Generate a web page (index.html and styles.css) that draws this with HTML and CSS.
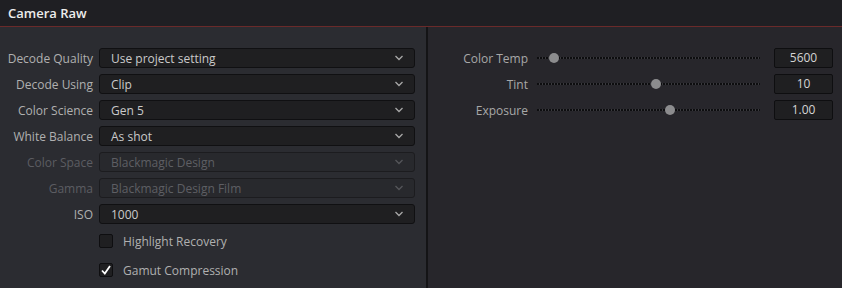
FILE: index.html
```html
<!DOCTYPE html>
<html lang="en">
<head>
    <meta charset="UTF-8">
    <title>Camera Raw</title>
    <link rel="stylesheet" href="styles.css">
</head>
<body>
    <div class="panel-header">Camera Raw</div>
    <div class="panel-body">
        <div class="col-left">
            <div class="row">
                <label>Decode Quality</label>
                <div class="combo"><span>Use project setting</span><svg class="chev" width="10" height="6" viewBox="0 0 10 6"><path d="M1.5 1 L5 4.5 L8.5 1" /></svg></div>
            </div>
            <div class="row">
                <label>Decode Using</label>
                <div class="combo"><span>Clip</span><svg class="chev" width="10" height="6" viewBox="0 0 10 6"><path d="M1.5 1 L5 4.5 L8.5 1" /></svg></div>
            </div>
            <div class="row">
                <label>Color Science</label>
                <div class="combo"><span>Gen 5</span><svg class="chev" width="10" height="6" viewBox="0 0 10 6"><path d="M1.5 1 L5 4.5 L8.5 1" /></svg></div>
            </div>
            <div class="row">
                <label>White Balance</label>
                <div class="combo"><span>As shot</span><svg class="chev" width="10" height="6" viewBox="0 0 10 6"><path d="M1.5 1 L5 4.5 L8.5 1" /></svg></div>
            </div>
            <div class="row disabled">
                <label>Color Space</label>
                <div class="combo"><span>Blackmagic Design</span><svg class="chev" width="10" height="6" viewBox="0 0 10 6"><path d="M1.5 1 L5 4.5 L8.5 1" /></svg></div>
            </div>
            <div class="row disabled">
                <label>Gamma</label>
                <div class="combo"><span>Blackmagic Design Film</span><svg class="chev" width="10" height="6" viewBox="0 0 10 6"><path d="M1.5 1 L5 4.5 L8.5 1" /></svg></div>
            </div>
            <div class="row">
                <label>ISO</label>
                <div class="combo"><span>1000</span><svg class="chev" width="10" height="6" viewBox="0 0 10 6"><path d="M1.5 1 L5 4.5 L8.5 1" /></svg></div>
            </div>
            <div class="check-row">
                <span class="box"></span>
                <span class="check-label">Highlight Recovery</span>
            </div>
            <div class="check-row">
                <span class="box"><svg width="12" height="12" viewBox="0 0 12 12"><path d="M2 6.5 L4.8 9.5 L10 2" /></svg></span>
                <span class="check-label">Gamut Compression</span>
            </div>
        </div>
        <div class="divider"></div>
        <div class="col-right">
            <div class="slider-row">
                <label>Color Temp</label>
                <div class="track"><span class="thumb" style="left: 17px"></span></div>
                <div class="value">5600</div>
            </div>
            <div class="slider-row">
                <label>Tint</label>
                <div class="track"><span class="thumb" style="left: 119px"></span></div>
                <div class="value">10</div>
            </div>
            <div class="slider-row">
                <label>Exposure</label>
                <div class="track"><span class="thumb" style="left: 133px"></span></div>
                <div class="value">1.00</div>
            </div>
        </div>
    </div>
</body>
</html>
```

FILE: styles.css
```css
body { margin: 0; width: 842px; height: 288px; overflow: hidden; background-color: #2b2c31; font-family: "Open Sans", "Liberation Sans", sans-serif; font-size: 12px; color: #b4b4b4; }
.panel-header { height: 27px; line-height: 26px; padding-left: 8px; background-color: #1f1f23; color: #ececec; font-weight: 600; font-size: 13px; border-bottom: 1px solid #6a2a2a; box-sizing: border-box; }
.panel-body { display: flex; height: 261px; }
.col-left { width: 426px; padding-top: 21px; box-sizing: border-box; background-color: #2b2c31; }
.divider { width: 2px; background-color: #141416; }
.col-right { flex: 1; padding-top: 21px; background-color: #27262b; }
.row { display: flex; align-items: center; height: 20px; margin-bottom: 6px; }
.row label { flex: 0 0 99px; text-align: right; padding-right: 6px; box-sizing: border-box; color: #b0b0b0; white-space: nowrap; }
.combo { flex: 0 0 316px; height: 20px; box-sizing: border-box; display: flex; align-items: center; justify-content: space-between; padding: 0 10px 0 11px; background-color: #1f1f21; border: 1px solid #101012; border-radius: 3px; color: #cacaca; }
.chev path { fill: none; stroke: #a8a8a8; stroke-width: 1.3; }
.row.disabled label { color: #5c5d62; }
.row.disabled .combo { background-color: #28292d; border-color: #1c1c1f; color: #5e5f64; }
.row.disabled .chev path { stroke: #55565a; }
.check-row { display: flex; align-items: center; padding-left: 99px; height: 14px; margin-top: 10px; margin-bottom: 1px; }
.check-row + .check-row { margin-top: 15px; }
.box { width: 14px; height: 14px; box-sizing: border-box; background-color: #1f1f21; border: 1px solid #0e0e10; border-radius: 2px; display: flex; align-items: center; justify-content: center; }
.box path { fill: none; stroke: #ffffff; stroke-width: 1.8; }
.check-label { margin-left: 10px; color: #b0b0b0; }
.slider-row { display: flex; align-items: center; height: 20px; margin-bottom: 6px; }
.slider-row label { flex: 0 0 100px; text-align: right; color: #a8a8a8; white-space: nowrap; }
.track { position: relative; flex: 0 0 223px; height: 2px; margin-left: 9px; background: repeating-linear-gradient(90deg, #0d0d0f 0 2px, #3a3a3e 2px 3px); }
.thumb { position: absolute; top: -4px; width: 10px; height: 10px; margin-left: -5px; border-radius: 50%; background-color: #8c8c8e; }
.value { flex: 0 0 59px; height: 20px; box-sizing: border-box; margin-left: 14px; background-color: #1f1f21; border: 1px solid #0e0e10; border-radius: 2px; color: #d4d4d4; text-align: center; line-height: 18px; }
```
